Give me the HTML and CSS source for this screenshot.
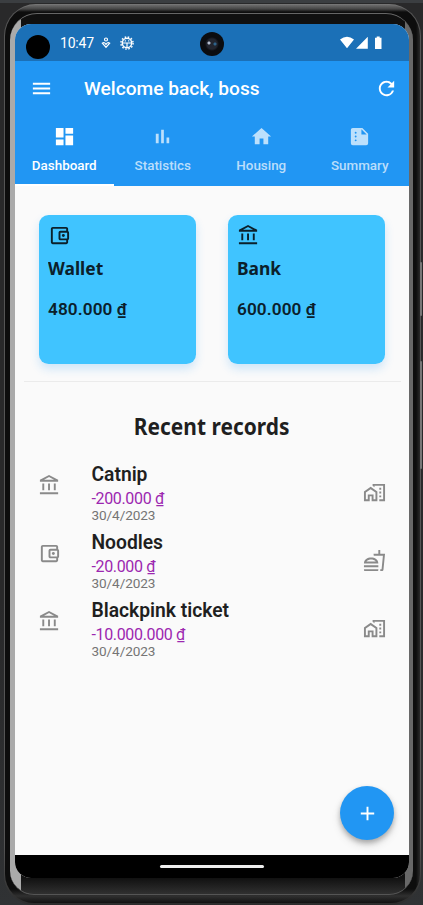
FILE: index.html
```html
<!DOCTYPE html>
<html lang="en">
<head>
<meta charset="utf-8">
<title>Wallet dashboard</title>
<link rel="stylesheet" href="styles.css">
</head>
<body>
<svg class="sprite" aria-hidden="true">
  <symbol id="bank" viewBox="0 0 24 24"><path d="M6.5 10h-2v7h2v-7zm6 0h-2v7h2v-7zm8.5 9H2v2h19v-2zm-2.500-9h-2v7h2v-7zm-7-6.740L16.710 6H6.290l5.210-2.740m0-2.260L2 6v2h19V6l-9.500-5z"/></symbol>
  <symbol id="wallet" viewBox="0 0 24 24"><path d="M21 7.280V5c0-1.100-.9-2-2-2H5c-1.110 0-2 .9-2 2v14c0 1.100.89 2 2 2h14c1.100 0 2-.9 2-2v-2.280A2 2 0 0 0 22 15V9c0-.74-.41-1.380-1-1.720zM20 9v6h-7V9h7zM5 19V5h14v2h-6c-1.100 0-2 .9-2 2v6c0 1.100.9 2 2 2h6v2H5z"/><circle cx="16" cy="12" r="1.5"/></symbol>
  <symbol id="homework" viewBox="0 0 24 24"><path d="M1 11v10h6v-5h2v5h6V11L8 6l-7 5zm12 8h-2v-5H5v5H3v-7l5-3.500 5 3.500v7zM10 3v1.970l2 1.430V5h9v14h-4v2h6V3H10zM17 7h2v2h-2zM17 11h2v2h-2zM17 15h2v2h-2z"/></symbol>
  <symbol id="food" viewBox="0 0 24 24"><path d="M1 21.980c0 .56.45 1.010 1.010 1.010H15c.56 0 1.010-.45 1.010-1.010V21H1v.98zM8.500 8.990C4.750 8.990 1 11 1 15h15c0-4-3.750-6.010-7.500-6.010zM3.620 13c1.110-1.550 3.470-2.010 4.880-2.010s3.770.46 4.880 2.010H3.620zM1 17h15v2H1zM18 5V1h-2v4h-5l.23 2h9.560l-1.400 14H18v2h1.720c.84 0 1.530-.65 1.630-1.470L23 5h-5z"/></symbol>
</svg>
<div class="device">
  <i class="side-key power"></i>
  <i class="side-key volume"></i>
  <div class="body-ring">
    <div class="glass">
      <div class="screen">
        <header class="status">
          <i class="hole"></i>
          <span class="clock">10:47</span>
          <svg class="st-person" viewBox="0 0 10 12"><g fill="none" stroke="currentColor" stroke-width="1.2"><circle cx="5" cy="2.500" r="1.500"/><path d="M1.300 6.200 5 10.300 8.700 6.200Q6.500 4.800 5 7.400 3.500 4.800 1.300 6.200z"/></g></svg>
          <svg class="st-bug" viewBox="0 0 14 14"><circle cx="7" cy="7" r="6.100" fill="none" stroke="currentColor" stroke-width="1.400" stroke-dasharray="1.600 1.595"/><circle cx="7" cy="7" r="4.700" fill="none" stroke="currentColor" stroke-width="1.500"/><path d="M2.500 7h9M7 7v5M4.700 4.900h1.200M8.100 4.900h1.200" stroke="currentColor" stroke-width="1.200"/></svg>
          <i class="camera"></i>
          <svg class="st-radio" viewBox="0 0 43 14"><path d="M0 3.500Q7-2 14 3.500L7 12.300zM16 12.700 27.800.7v12zM35 1.700h1.700V.5h3v1.200h1.800v11.300H35z"/></svg>
        </header>
        <div class="appbar">
          <div class="toolbar">
            <svg class="icon" viewBox="0 0 24 24"><path d="M3 18h18v-2H3v2zm0-5h18v-2H3v2zm0-7v2h18V6H3z"/></svg>
            <h1>Welcome back, boss</h1>
            <svg class="icon" viewBox="0 0 24 24"><path d="M17.650 6.350A7.958 7.958 0 0 0 12 4c-4.420 0-7.990 3.580-7.990 8s3.570 8 7.990 8c3.730 0 6.840-2.550 7.730-6h-2.080A5.990 5.990 0 0 1 12 18c-3.310 0-6-2.690-6-6s2.690-6 6-6c1.660 0 3.140.69 4.220 1.780L13 11h7V4l-2.350 2.350z"/></svg>
          </div>
          <nav class="tabs">
            <a class="tab active"><svg class="icon" viewBox="0 0 24 24"><path d="M3 13h8V3H3v10zm0 8h8v-6H3v6zm10 0h8V11h-8v10zm0-18v6h8V3h-8z"/></svg><span>Dashboard</span></a>
            <a class="tab"><svg class="icon" viewBox="0 0 24 24"><path d="M5 9.200h3V19H5V9.200zM10.600 5h2.800v14h-2.800V5zm5.600 8H19v6h-2.800v-6z"/></svg><span>Statistics</span></a>
            <a class="tab"><svg class="icon" viewBox="0 0 24 24"><path d="M10 20v-6h4v6h5v-8h3L12 3 2 12h3v8z"/></svg><span>Housing</span></a>
            <a class="tab"><svg class="icon" viewBox="0 0 24 24"><path fill-rule="evenodd" d="M15 3H5a2 2 0 0 0-2 2v14a2 2 0 0 0 2 2h14a2 2 0 0 0 2-2V9l-6-6zM8 17a1 1 0 1 1 0-2 1 1 0 0 1 0 2zm0-4a1 1 0 1 1 0-2 1 1 0 0 1 0 2zm0-4a1 1 0 1 1 0-2 1 1 0 0 1 0 2zm6 1V4.500l5.500 5.500H14z"/></svg><span>Summary</span></a>
          </nav>
        </div>
        <main class="content">
          <section class="cards">
            <article class="card"><svg class="icon"><use href="#wallet"/></svg><h2><span>Wallet</span></h2><p>480.000 ₫</p></article>
            <article class="card"><svg class="icon"><use href="#bank"/></svg><h2><span>Bank</span></h2><p>600.000 ₫</p></article>
          </section>
          <h2 class="heading"><span>Recent records</span></h2>
          <ul class="records">
            <li><svg class="icon"><use href="#bank"/></svg><div><h3>Catnip</h3><p>-200.000 ₫</p><time>30/4/2023</time></div><svg class="icon kind"><use href="#homework"/></svg></li>
            <li><svg class="icon"><use href="#wallet"/></svg><div><h3>Noodles</h3><p>-20.000 ₫</p><time>30/4/2023</time></div><svg class="icon kind"><use href="#food"/></svg></li>
            <li><svg class="icon"><use href="#bank"/></svg><div><h3>Blackpink ticket</h3><p>-10.000.000 ₫</p><time>30/4/2023</time></div><svg class="icon kind"><use href="#homework"/></svg></li>
          </ul>
          <button class="fab" aria-label="Add"><svg class="icon" viewBox="0 0 24 24"><path d="M19 13h-6v6h-2v-6H5v-2h6V5h2v6h6v2z"/></svg></button>
        </main>
        <footer class="gesture"><i></i></footer>
      </div>
    </div>
  </div>
</div>
</body>
</html>
```
FILE: styles.css
```css
* { box-sizing: border-box; margin: 0; padding: 0; }
html { height: 905px; overflow: hidden; }
body {
  width: 423px; height: 905px; overflow: hidden; padding: 4px 2px 0 4px;
  font-family: Roboto, sans-serif;
  background: linear-gradient(#3b3e41 0 3px, #29292a 3px 600px, #303234 905px);
}
.sprite { position: absolute; width: 0; height: 0; }
.icon { display: block; width: 23px; height: 23px; fill: currentColor; flex: none; }

.device {
  position: relative; height: 901px; padding: 1px 1px 2px 1px; border-radius: 32px 32px 30px 30px;
  background: linear-gradient(#777 0, #555 8px, #555 840px, #2c2c2c 901px);
}
.body-ring {
  height: 898px; padding: 8px 7px 8px 5px; border-radius: 31px 31px 29px 29px;
  background:
    linear-gradient(#6b6b6b 0, #454545 4px, rgba(17,17,17,0) 7px),
    linear-gradient(transparent 884px, #303030 891px, #111 898px),
    linear-gradient(90deg, #0d0d0d 0 50%, #0d0d0d 50% calc(100% - 4px), #2a2a2a 100%);
}
.glass {
  height: 882px; padding: 10px 4px 18px 5px; border-radius: 27px 27px 24px 24px;
  border-top: 1px solid #666; border-bottom: 1px solid #555;
  background:
    linear-gradient(#101010 0 860px, #111 864px, #343434 882px) 11px 0 / calc(100% - 19px) 100% no-repeat,
    linear-gradient(90deg, #aaa 0 50%, #686868 50%);
}
.side-key { position: absolute; right: -1px; width: 2px; background: #777; border-radius: 1px; }
.power { top: 258px; height: 54px; }
.volume { top: 357px; height: 108px; }

.screen {
  height: 854px; width: 394px; border-radius: 16px; overflow: hidden;
  display: flex; flex-direction: column; background: #fafafa;
}
.status {
  position: relative; flex: none; height: 37px; display: flex; align-items: center;
  background: #1b70b7; color: #fff; padding-left: 11px;
}
.hole { width: 24px; height: 24px; margin-top: 9px; border-radius: 50%; background: #000; }
.clock { margin-left: 10px; font-size: 14px; letter-spacing: -.2px; line-height: 37px; width: 34px; padding-top: 1px; }
.st-person { width: 10px; height: 12px; margin-left: 7px; margin-top: 1px; }
.st-bug { width: 14px; height: 14px; margin-left: 9px; margin-top: 1px; }
.camera {
  position: absolute; left: 185px; top: 8px; width: 24px; height: 24px; border-radius: 50%;
  background: radial-gradient(circle at 9px 11px, #b5bed0 0 1px, transparent 2px), radial-gradient(circle at 15px 12px, #2e638b 0 1px, transparent 2px), radial-gradient(circle, #22252f 0 5px, #0b0c0f 7px);
}
.st-radio { width: 43px; height: 14px; margin: 1px 26px 0 auto; fill: #fff; }

.appbar { flex: none; height: 125px; background: #2196f3; color: #fff; }
.toolbar { display: flex; align-items: center; height: 54px; padding: 0 11.500px 0 15px; }
.toolbar h1 { flex: 1; margin-left: 31px; font-size: 19.150px; font-weight: 500; }
.tabs { display: grid; grid-template-columns: repeat(4, 1fr); height: 71px; }
.tab { display: flex; flex-direction: column; align-items: center; padding-top: 10px; color: rgba(255,255,255,.7); }
.tab span { margin-top: 10px; font-size: 13.400px; line-height: 16px; font-weight: 500; }
.active { color: #fff; border-bottom: 2px solid #fff; }

.content { position: relative; flex: 1; background: #fafafa; color: #1f1f1f; }
.cards {
  display: grid; grid-template-columns: 157.500px 157.500px; gap: 31.500px;
  height: 196px; margin: 0 8.500px; padding: 28.500px 15px 0; border-bottom: 1px solid #ebebeb;
}
.card {
  height: 149px; padding: 9px 9.500px; border-radius: 9.600px; color: #0b202b;
  background: #40c4ff; box-shadow: 0 5px 10px rgba(33,150,243,.2);
}
.card h2 { margin-top: 8px; font: 700 18.500px/26px "Noto Sans", sans-serif; }
.card h2 span { display: inline-block; transform: scaleX(.94); transform-origin: left; }
.card p { margin-top: 17px; font-size: 17.200px; font-weight: 600; line-height: 22px; letter-spacing: .1px; }
.heading { margin-top: 28px; text-align: center; font: 700 22.500px/34px "Noto Sans", sans-serif; }
.heading span { display: inline-block; transform: scaleX(.93); }

.records { list-style: none; margin-top: 18px; }
.records li { display: flex; height: 68px; padding: 0 23px; }
.records li > .icon { margin-top: 12px; color: #8a8a8a; }
.records li > .kind { margin-top: 19px; margin-left: auto; }
.records div { margin-left: 30.500px; padding-top: 1px; }
.records h3 { font-size: 19.300px; font-weight: 600; letter-spacing: -.02px; line-height: 24px; }
.records p { margin-top: 2px; color: #9c27b0; font-size: 16px; letter-spacing: -.35px; line-height: 20px; }
.records time { display: block; margin-top: -2px; color: #757575; font-size: 13.600px; letter-spacing: -.1px; line-height: 16px; }
.fab {
  position: absolute; right: 15px; bottom: 15px; width: 54px; height: 54px; display: grid; place-items: center;
  border: 0; border-radius: 50%; background: #2196f3; color: #fff;
  box-shadow: 0 3px 5px rgba(0,0,0,.25), 0 5px 10px rgba(0,0,0,.12);
}
.gesture { flex: none; height: 23px; background: #000; padding-top: 10px; }
.gesture i { display: block; width: 104px; height: 3px; margin: 0 auto; border-radius: 2px; background: #eee; }
```
